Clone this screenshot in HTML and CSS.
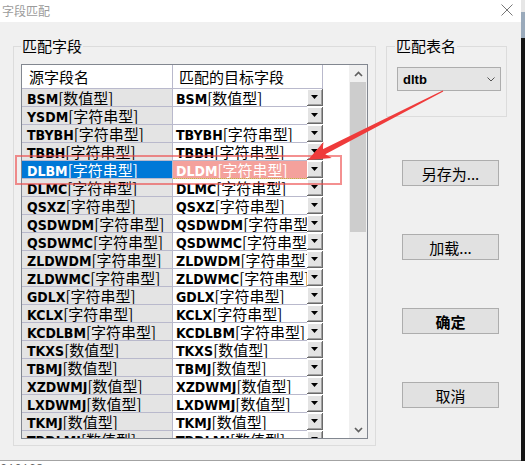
FILE: index.html
```html
<!DOCTYPE html>
<html lang="zh-CN">
<head>
    <meta charset="UTF-8">
    <title>字段匹配</title>
    <link rel="stylesheet" href="styles.css">
</head>
<body>

<div class="screen">
    <div class="window">
        <div class="titlebar">
            <span class="title">字段匹配</span>
            <svg class="close" width="12" height="12" viewBox="0 0 12 12">
                <path d="M0.5 0.5 L11.5 11.5 M11.5 0.5 L0.5 11.5" stroke="#777" stroke-width="1" fill="none"/>
            </svg>
        </div>

        <div class="client">
            <!-- 字段对照表 -->
            <fieldset class="group fields">
                <legend>匹配字段</legend>
                <div class="grid">
                    <div class="sheet">
                        <div class="head">
                            <div class="cell src">源字段名</div>
                            <div class="cell dst">匹配的目标字段</div>
                        </div>
                        <div class="row"><div class="cell src"><b>BSM</b>[数值型]</div><div class="cell dst"><b>BSM</b>[数值型]</div><span class="drop"></span></div>
                        <div class="row"><div class="cell src"><b>YSDM</b>[字符串型]</div><div class="cell dst"></div><span class="drop"></span></div>
                        <div class="row"><div class="cell src"><b>TBYBH</b>[字符串型]</div><div class="cell dst"><b>TBYBH</b>[字符串型]</div><span class="drop"></span></div>
                        <div class="row"><div class="cell src"><b>TBBH</b>[字符串型]</div><div class="cell dst"><b>TBBH</b>[字符串型]</div><span class="drop"></span></div>
                        <div class="row sel"><div class="cell src"><b>DLBM</b>[字符串型]</div><div class="cell dst"><b>DLDM</b>[字符串型]</div><span class="drop"></span></div>
                        <div class="row"><div class="cell src"><b>DLMC</b>[字符串型]</div><div class="cell dst"><b>DLMC</b>[字符串型]</div><span class="drop"></span></div>
                        <div class="row"><div class="cell src"><b>QSXZ</b>[字符串型]</div><div class="cell dst"><b>QSXZ</b>[字符串型]</div><span class="drop"></span></div>
                        <div class="row"><div class="cell src"><b>QSDWDM</b>[字符串型]</div><div class="cell dst"><b>QSDWDM</b>[字符串型]</div><span class="drop"></span></div>
                        <div class="row"><div class="cell src"><b>QSDWMC</b>[字符串型]</div><div class="cell dst"><b>QSDWMC</b>[字符串型]</div><span class="drop"></span></div>
                        <div class="row"><div class="cell src"><b>ZLDWDM</b>[字符串型]</div><div class="cell dst"><b>ZLDWDM</b>[字符串型]</div><span class="drop"></span></div>
                        <div class="row"><div class="cell src"><b>ZLDWMC</b>[字符串型]</div><div class="cell dst"><b>ZLDWMC</b>[字符串型]</div><span class="drop"></span></div>
                        <div class="row"><div class="cell src"><b>GDLX</b>[字符串型]</div><div class="cell dst"><b>GDLX</b>[字符串型]</div><span class="drop"></span></div>
                        <div class="row"><div class="cell src"><b>KCLX</b>[字符串型]</div><div class="cell dst"><b>KCLX</b>[字符串型]</div><span class="drop"></span></div>
                        <div class="row"><div class="cell src"><b>KCDLBM</b>[字符串型]</div><div class="cell dst"><b>KCDLBM</b>[字符串型]</div><span class="drop"></span></div>
                        <div class="row"><div class="cell src"><b>TKXS</b>[数值型]</div><div class="cell dst"><b>TKXS</b>[数值型]</div><span class="drop"></span></div>
                        <div class="row"><div class="cell src"><b>TBMJ</b>[数值型]</div><div class="cell dst"><b>TBMJ</b>[数值型]</div><span class="drop"></span></div>
                        <div class="row"><div class="cell src"><b>XZDWMJ</b>[数值型]</div><div class="cell dst"><b>XZDWMJ</b>[数值型]</div><span class="drop"></span></div>
                        <div class="row"><div class="cell src"><b>LXDWMJ</b>[数值型]</div><div class="cell dst"><b>LXDWMJ</b>[数值型]</div><span class="drop"></span></div>
                        <div class="row"><div class="cell src"><b>TKMJ</b>[数值型]</div><div class="cell dst"><b>TKMJ</b>[数值型]</div><span class="drop"></span></div>
                        <div class="row"><div class="cell src"><b>TBDLMJ</b>[数值型]</div><div class="cell dst"><b>TBDLMJ</b>[数值型]</div><span class="drop"></span></div>
                    </div>
                    <div class="vscroll">
                        <span class="step">
                            <svg width="9" height="6" viewBox="0 0 9 6"><polyline points="1,5 4.5,1.5 8,5" fill="none" stroke="#606060" stroke-width="1.7"/></svg>
                        </span>
                        <span class="thumb"></span>
                        <span class="step down">
                            <svg width="9" height="6" viewBox="0 0 9 6"><polyline points="1,1 4.5,4.5 8,1" fill="none" stroke="#606060" stroke-width="1.7"/></svg>
                        </span>
                    </div>
                </div>
            </fieldset>

            <!-- 目标表与操作按钮 -->
            <div class="side">
                <fieldset class="group tables">
                    <legend>匹配表名</legend>
                    <div class="combo">
                        <b>dltb</b>
                        <svg width="8" height="5" viewBox="0 0 8 5"><polyline points="0.5,0.5 4,4 7.5,0.5" fill="none" stroke="#555" stroke-width="1"/></svg>
                    </div>
                </fieldset>
                <button class="btn first">另存为...</button>
                <button class="btn">加载...</button>
                <button class="btn strong">确定</button>
                <button class="btn">取消</button>
            </div>
        </div>

        <!-- 红色标注框与箭头 -->
        <div class="mark"></div>
        <svg class="pointer" width="521" height="461" viewBox="0 0 521 461">
            <polygon points="308,160 331.7,158 325.3,154.3 443.3,91.5 442.7,90.5 322.7,149.3 323.5,142" fill="#ef3b3b"/>
        </svg>
    </div>
    <div class="edge"></div>
</div>
<div class="below">210168</div>

</body>
</html>
```

FILE: styles.css
```css
* {
    box-sizing: border-box;
}

body {
    margin: 0;
    background-color: #ffffff;
    font-family: "Noto Sans CJK SC", sans-serif;
    color: #000;
}

.screen {
    display: flex;
    height: 461px;
}

.window {
    position: relative;
    width: 521px;
    height: 461px;
    background-color: #f0f0f0;
    border-bottom: 1px solid #a3a3a3;
}

.edge {
    width: 4px;
    background: linear-gradient(to bottom, #e6e6e6 0, #e6e6e6 12px, #9aaabb 12px, #9aaabb 38px, #141414 38px);
}

.below {
    height: 4px;
    overflow: hidden;
    font: 12px "Liberation Mono", monospace;
    line-height: 18px;
    color: #666;
}

/* 标题栏 */
.titlebar {
    height: 22px;
    background-color: #ffffff;
    display: flex;
    align-items: center;
    justify-content: space-between;
    padding: 0 8px 2px 2px;
}

.title {
    font-size: 12px;
    color: #9b9b9b;
}

.client {
    display: flex;
    align-items: flex-start;
    padding-left: 13px;
}

.group {
    margin: 0;
    min-width: 0;
    border: 1px solid #dcdcdc;
}

.group legend {
    font-size: 15px;
    line-height: 18px;
    padding: 0 1px;
}

.fields {
    width: 363px;
    margin-top: 15px;
    padding: 9px 7px 6px;
}

/* 字段表格 */
.grid {
    display: flex;
    height: 375px;
    border: 1px solid #828790;
    background-color: #ffffff;
}

.sheet {
    width: 329px;
    overflow: hidden;
}

.head,
.row {
    display: flex;
}

.cell {
    white-space: nowrap;
    overflow: hidden;
    font-size: 15px;
}

.cell b {
    font-family: "DejaVu Sans Condensed", "DejaVu Sans", sans-serif;
    font-stretch: condensed;
    font-weight: bold;
    font-size: 14px;
}

.head .cell {
    height: 24px;
    line-height: 23px;
    border-right: 1px solid #b9b9cc;
    border-bottom: 1px solid #b9b9cc;
}

.head .src {
    width: 151px;
    padding-left: 7px;
}

.head .dst {
    width: 150px;
    padding-left: 6px;
}

.row {
    height: 18px;
}

.row .cell {
    line-height: 17px;
    border-bottom: 1px solid #b9b9cc;
}

.row .src {
    width: 151px;
    padding-left: 5px;
    background-color: #e4e4e4;
    border-right: 1px solid #b9b9cc;
}

.row .dst {
    width: 134px;
    padding-left: 3px;
}

.row.sel .src {
    background-color: #0078d7;
    color: #fff;
}

.row.sel .dst {
    background-color: #f4a19c;
    color: #fff;
    border-bottom: 1px dotted #b8c040;
}

.drop {
    width: 16px;
    height: 17px;
    display: flex;
    align-items: center;
    justify-content: center;
    background-color: #e3e3e3;
    border-right: 1px solid #696969;
    border-bottom: 1px solid #696969;
    box-shadow: inset 1px 1px #ffffff, inset -1px -1px #a0a0a0;
}

.drop::after {
    content: "";
    width: 7px;
    height: 4px;
    background-color: #000;
    clip-path: polygon(0 0, 100% 0, 50% 100%);
}

.vscroll {
    width: 18px;
    display: flex;
    flex-direction: column;
    align-items: center;
    background-color: #f0f0f0;
}

.step {
    width: 100%;
    height: 17px;
    display: flex;
    align-items: center;
    justify-content: center;
}

.step.down {
    margin-top: auto;
}

.thumb {
    width: 16px;
    height: 150px;
    background-color: #cdcdcd;
}

/* 右侧面板 */
.side {
    margin-left: 10px;
    display: flex;
    flex-direction: column;
    align-items: flex-start;
}

.tables {
    width: 121px;
    margin-top: 15px;
    padding: 12px 0 25px 10px;
}

.tables legend {
    margin-left: -2px;
}

.combo {
    width: 104px;
    height: 24px;
    display: flex;
    align-items: center;
    justify-content: space-between;
    padding: 0 5px;
    background-color: #e5e5e5;
    border: 1px solid #adadad;
}

.combo b {
    font: bold 13px "Liberation Sans", sans-serif;
}

.btn {
    width: 97px;
    height: 26px;
    margin: 48px 0 0 16px;
    padding: 0;
    font-family: "Noto Sans CJK SC", sans-serif;
    font-size: 15px;
    color: #000;
    background-color: #e1e1e1;
    border: 1px solid #adadad;
}

.btn.first {
    margin-top: 43px;
}

.btn.strong {
    font-weight: bold;
}

/* 标注 */
.mark {
    position: absolute;
    left: 15px;
    top: 155px;
    width: 327px;
    height: 30px;
    border: 2px solid rgba(236, 70, 70, 0.6);
}

.pointer {
    position: absolute;
    left: 0;
    top: 0;
    pointer-events: none;
}
```
